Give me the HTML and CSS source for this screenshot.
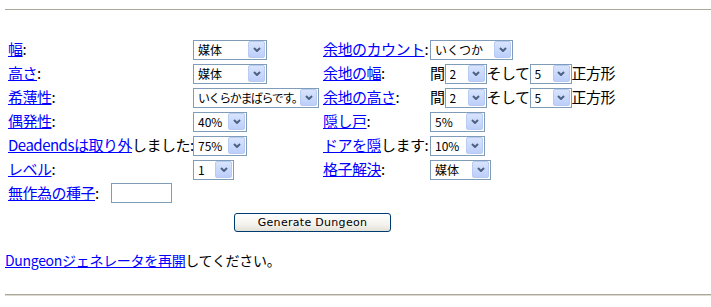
FILE: index.html
```html
<!DOCTYPE html>
<html lang="ja">
<head>
	<meta charset="UTF-8">
	<title>Dungeon Generator</title>
	<link rel="stylesheet" href="styles.css">
</head>
<body>
<hr class="rule top">
<form class="gen">
	<div class="cell"><a href="#">幅</a>:</div>
	<div class="cell"><span class="sel w73"><select><option>媒体</option></select><span class="arr"><svg width="8" height="5" viewBox="0 0 8 5"><polyline points="1,1 4,4 7,1"/></svg></span></span></div>
	<div class="cell"><a href="#">余地のカウント</a>:</div>
	<div class="cell"><span class="sel w83"><select><option>いくつか</option></select><span class="arr"><svg width="8" height="5" viewBox="0 0 8 5"><polyline points="1,1 4,4 7,1"/></svg></span></span></div>

	<div class="cell"><a href="#">高さ</a>:</div>
	<div class="cell"><span class="sel w73"><select><option>媒体</option></select><span class="arr"><svg width="8" height="5" viewBox="0 0 8 5"><polyline points="1,1 4,4 7,1"/></svg></span></span></div>
	<div class="cell"><a href="#">余地の幅</a>:</div>
	<div class="cell">間<span class="sel w42"><select><option>2</option></select><span class="arr"><svg width="8" height="5" viewBox="0 0 8 5"><polyline points="1,1 4,4 7,1"/></svg></span></span>そして<span class="sel w42"><select><option>5</option></select><span class="arr"><svg width="8" height="5" viewBox="0 0 8 5"><polyline points="1,1 4,4 7,1"/></svg></span></span>正方形</div>

	<div class="cell"><a href="#">希薄性</a>:</div>
	<div class="cell"><span class="sel w126 tight"><select><option>いくらかまばらです。</option></select><span class="arr"><svg width="8" height="5" viewBox="0 0 8 5"><polyline points="1,1 4,4 7,1"/></svg></span></span></div>
	<div class="cell"><a href="#">余地の高さ</a>:</div>
	<div class="cell">間<span class="sel w42"><select><option>2</option></select><span class="arr"><svg width="8" height="5" viewBox="0 0 8 5"><polyline points="1,1 4,4 7,1"/></svg></span></span>そして<span class="sel w42"><select><option>5</option></select><span class="arr"><svg width="8" height="5" viewBox="0 0 8 5"><polyline points="1,1 4,4 7,1"/></svg></span></span>正方形</div>

	<div class="cell"><a href="#">偶発性</a>:</div>
	<div class="cell"><span class="sel w54"><select><option>40%</option></select><span class="arr"><svg width="8" height="5" viewBox="0 0 8 5"><polyline points="1,1 4,4 7,1"/></svg></span></span></div>
	<div class="cell"><a href="#">隠し戸</a>:</div>
	<div class="cell"><span class="sel w55"><select><option>5%</option></select><span class="arr"><svg width="8" height="5" viewBox="0 0 8 5"><polyline points="1,1 4,4 7,1"/></svg></span></span></div>

	<div class="cell"><a href="#">Deadendsは取り外</a>しました:</div>
	<div class="cell"><span class="sel w54"><select><option>75%</option></select><span class="arr"><svg width="8" height="5" viewBox="0 0 8 5"><polyline points="1,1 4,4 7,1"/></svg></span></span></div>
	<div class="cell"><a href="#">ドアを隠</a>します:</div>
	<div class="cell"><span class="sel w55"><select><option>10%</option></select><span class="arr"><svg width="8" height="5" viewBox="0 0 8 5"><polyline points="1,1 4,4 7,1"/></svg></span></span></div>

	<div class="cell"><a href="#">レベル</a>:</div>
	<div class="cell"><span class="sel w41"><select><option>1</option></select><span class="arr"><svg width="8" height="5" viewBox="0 0 8 5"><polyline points="1,1 4,4 7,1"/></svg></span></span></div>
	<div class="cell"><a href="#">格子解決</a>:</div>
	<div class="cell"><span class="sel w61"><select><option>媒体</option></select><span class="arr"><svg width="8" height="5" viewBox="0 0 8 5"><polyline points="1,1 4,4 7,1"/></svg></span></span></div>

	<div class="cell full"><a href="#">無作為の種子</a>: <input type="text" class="seed"></div>

	<div class="btnrow"><button type="button" class="go">Generate Dungeon</button></div>
</form>
<p class="back"><a href="#">Dungeonジェネレータを再開</a>してください。</p>
<hr class="rule bottom">
</body>
</html>
```

FILE: styles.css
```css
body {
	margin: 0 0 0 5px;
	background: #fff;
	color: #000;
	font-family: "Noto Sans CJK JP", "Liberation Sans", sans-serif;
	font-size: 14px;
}
a {
	color: #00f;
	text-decoration: underline;
}
.rule {
	border: 0;
	height: 0;
	margin: 0;
}
.rule.top {
	margin-top: 9px;
	border-top: 1px solid #aca899;
}
.rule.bottom {
	margin-top: 25px;
	border-top: 1px solid #aca899;
	border-bottom: 1px solid #dcdad2;
}
.gen {
	display: grid;
	grid-template-columns: 185px 130px 107px 187px;
	grid-auto-rows: 20px;
	row-gap: 4px;
	width: 609px;
	margin: 29px 0 0 3px;
}
.cell {
	display: flex;
	align-items: center;
	white-space: nowrap;
	font-size: 15px;
	letter-spacing: -0.5px;
	line-height: 20px;
}
.cell.full {
	grid-column: 1 / 5;
}
.sel {
	position: relative;
	display: inline-block;
	height: 20px;
	letter-spacing: 0;
}
.sel select {
	-webkit-appearance: none;
	appearance: none;
	box-sizing: border-box;
	width: 100%;
	height: 20px;
	margin: 0;
	padding: 0 18px 0 4px;
	border: 1px solid #7f9db9;
	border-radius: 0;
	background: #fff;
	color: #000;
	font-family: "Noto Sans CJK JP", "Liberation Sans", sans-serif;
	font-size: 12px;
	line-height: 18px;
}
.sel.tight select {
	letter-spacing: -1.4px;
}
.arr {
	position: absolute;
	top: 2px;
	right: 2px;
	width: 15px;
	height: 15px;
	border: 1px solid #b9cbf3;
	border-radius: 2px;
	background: linear-gradient(#d8e4fd, #bccffa);
	display: flex;
	align-items: center;
	justify-content: center;
	pointer-events: none;
}
.arr polyline {
	fill: none;
	stroke: #4d6185;
	stroke-width: 2;
}
.w41 { width: 41px; }
.w42 { width: 42px; }
.w54 { width: 54px; }
.w55 { width: 55px; }
.w61 { width: 61px; }
.w73 { width: 74px; }
.w83 { width: 83px; }
.w126 { width: 126px; }
.seed {
	box-sizing: border-box;
	width: 61px;
	height: 20px;
	margin: 0 0 0 12px;
	border: 1px solid #7f9db9;
	padding: 0 2px;
}
.btnrow {
	grid-column: 1 / 5;
	text-align: center;
	margin-top: 3px;
}
.go {
	box-sizing: border-box;
	width: 157px;
	height: 19px;
	padding: 0;
	border: 1px solid #003c74;
	border-radius: 3px;
	background: linear-gradient(#fff, #f4f3ee 60%, #e3e0d6);
	color: #000;
	font-family: "DejaVu Sans", Verdana, sans-serif;
	font-size: 11px;
	letter-spacing: 0.3px;
	cursor: pointer;
}
.back {
	margin: 24px 0 0;
	line-height: 18px;
	letter-spacing: -0.3px;
}
```
